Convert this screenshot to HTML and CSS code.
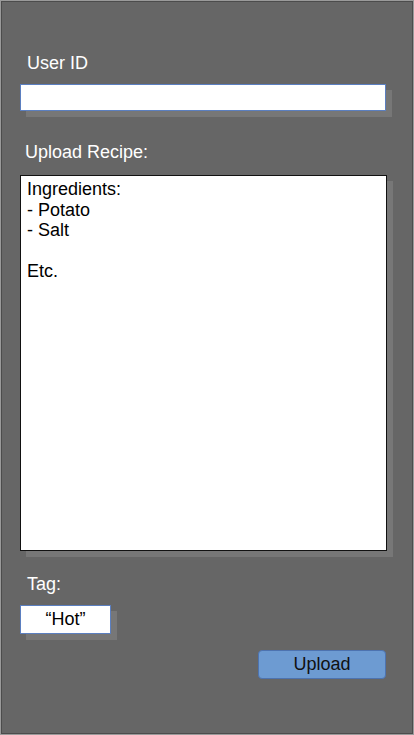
FILE: index.html
```html
<!DOCTYPE html>
<html>
<head>
<meta charset="utf-8">
<link rel="stylesheet" href="styles.css">
</head>
<body>
<div class="frame">
  <div class="label label-user">User ID</div>
  <input class="field user-field" type="text" value="">
  <div class="label label-recipe">Upload Recipe:</div>
  <textarea class="recipe">Ingredients:
- Potato
- Salt

Etc.</textarea>
  <div class="label label-tag">Tag:</div>
  <input class="field tag-field" type="text" value="“Hot”">
  <div class="actions">
    <button class="upload" type="button">Upload</button>
  </div>
</div>
</body>
</html>
```
FILE: styles.css
```css
html, body {
  margin: 0;
  padding: 0;
  background: #666666;
}
.frame {
  box-sizing: border-box;
  width: 414px;
  height: 735px;
  background: #666666;
  border: 1px solid #9a9a9a;
  box-shadow: inset 0 0 0 1px #4c4c4c;
  padding: 52px 27px 0 19px;
  display: flex;
  flex-direction: column;
  align-items: flex-start;
  font-family: "Liberation Sans", Arial, sans-serif;
}
.label {
  color: #ffffff;
  font-size: 18px;
  line-height: 21px;
  margin-left: 7px;
}
.label-recipe { margin-top: 31px; margin-left: 5px; }
.label-tag { margin-top: 23px; }
.field {
  box-sizing: border-box;
  background: #ffffff;
  border: 1px solid #5b7fc0;
  margin: 10px 0 0 0;
  padding: 0;
  font-family: "Liberation Sans", Arial, sans-serif;
  font-size: 18px;
  color: #000;
  outline: none;
  box-shadow: 6px 6px 0 #777777;
}
.user-field {
  width: 366px;
  height: 27px;
}
.recipe {
  box-sizing: border-box;
  width: 367px;
  height: 376px;
  margin-top: 12px;
  border: 1px solid #111111;
  background: #ffffff;
  padding: 3px 6px 2px 6px;
  font-family: "Liberation Sans", Arial, sans-serif;
  font-size: 18px;
  line-height: 20.5px;
  color: #000;
  resize: none;
  outline: none;
  overflow: hidden;
  box-shadow: 6px 6px 0 #777777;
}
.tag-field {
  width: 91px;
  height: 29px;
  margin-top: 10px;
  text-align: center;
}
.actions {
  align-self: stretch;
  display: flex;
  justify-content: flex-end;
  margin-top: 16px;
}
.upload {
  box-sizing: border-box;
  width: 128px;
  height: 29px;
  background: #6d9bd2;
  border: 1px solid #4d73b0;
  border-radius: 4px;
  font-family: "Liberation Sans", Arial, sans-serif;
  font-size: 18px;
  color: #111111;
  padding: 0;
}
```
